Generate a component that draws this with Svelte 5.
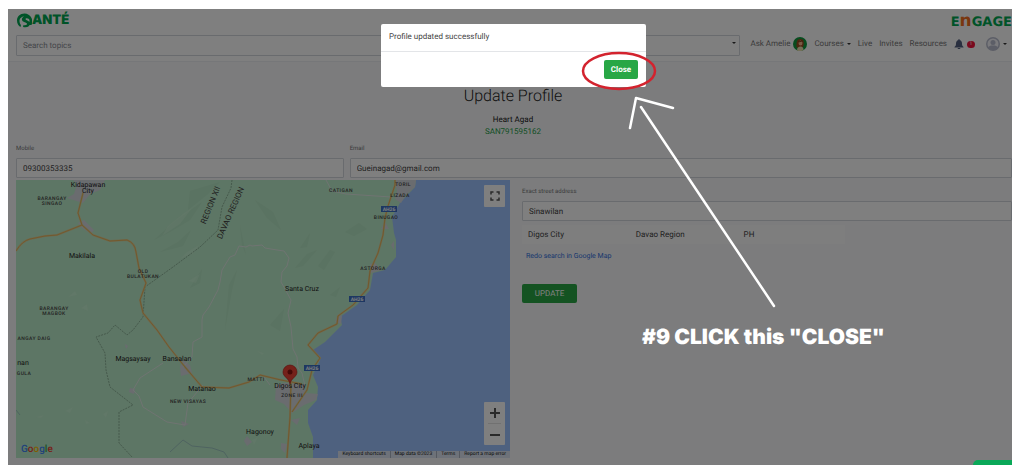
<script lang="ts">
  type Label = { text: string; x: number; y: number; kind?: string };

  let mobile = $state('09300353335');
  let email = $state('Gueinagad@gmail.com');
  let street = $state('Sinawilan');
  let showDialog = $state(true);

  const places: Label[] = [
    { text: 'Kidapawan', x: 88, y: 187 },
    { text: 'City', x: 88, y: 193 },
    { text: 'Makilala', x: 82, y: 258 },
    { text: 'Santa Cruz', x: 302, y: 291 },
    { text: 'Magsaysay', x: 133, y: 361 },
    { text: 'Bansalan', x: 177, y: 361 },
    { text: 'Matanao', x: 202, y: 391 },
    { text: 'Digos City', x: 290, y: 388 },
    { text: 'Hagonoy', x: 260, y: 434 },
    { text: 'Aplaya', x: 309, y: 448 },
    { text: 'nan', x: 23, y: 365 },
    { text: 'BARANGAY', x: 52, y: 200, kind: 'small' },
    { text: 'SINGAO', x: 52, y: 205, kind: 'small' },
    { text: 'OLD', x: 143, y: 273, kind: 'small' },
    { text: 'BULATUKAN', x: 143, y: 278, kind: 'small' },
    { text: 'BARANGAY', x: 54, y: 310, kind: 'small' },
    { text: 'MAGBOK', x: 54, y: 315, kind: 'small' },
    { text: 'ANGAY DAIG', x: 34, y: 340, kind: 'small' },
    { text: 'GULA', x: 24, y: 375, kind: 'small' },
    { text: 'NEW VISAYAS', x: 188, y: 403, kind: 'small' },
    { text: 'MATTI', x: 256, y: 381, kind: 'small' },
    { text: 'ZONE III', x: 292, y: 397, kind: 'small' },
    { text: 'CATIGAN', x: 341, y: 192, kind: 'small' },
    { text: 'TORIL', x: 403, y: 186, kind: 'small' },
    { text: 'LIZADA', x: 400, y: 197, kind: 'small' },
    { text: 'BINUGAO', x: 386, y: 219, kind: 'small' },
    { text: 'ASTORGA', x: 373, y: 270, kind: 'small' }
  ];

  const shields = [
    { x: 389, y: 209 },
    { x: 357, y: 299 },
    { x: 312, y: 368 }
  ];
</script>

<div class="page">
  <header>
    <div class="brands">
      <a class="sante" href="/" aria-label="Santé">
        <svg width="15" height="15" viewBox="0 0 30 30" aria-hidden="true">
          <path fill="#00a651" d="M15 1C6 1 0 7 0 15c0 6 3 11 7 13l1-4c-2-2-3-5-3-8 0-6 5-9 9-9-3 2-5 4-4 7 1 5 10 4 10 8 0 2-3 3-7 2l-1 4c8 2 14-1 14-7 0-6-9-6-9-9 0-2 4-2 7 0 2 3 1 8-1 12h6c2-4 2-10 0-14C26 4 21 1 15 1z" />
        </svg>
        <span>ANTÉ</span>
      </a>
      <a class="engage" href="/">E<span>n</span>GAGE</a>
    </div>
    <div class="bar">
      <div class="search">
        <select aria-label="Search topics">
          <option>Search topics</option>
        </select>
        <i class="caret"></i>
      </div>
      <nav>
        <a class="ask" href="#ask">
          Ask Amelie
          <svg width="14" height="14" viewBox="0 0 28 28" aria-hidden="true">
            <circle cx="14" cy="14" r="14" fill="#10983f" />
            <path d="M7 20c0-9 0-16 8-16 7 0 7 6 6 14l-3 4h-8z" fill="#9a4c20" />
            <ellipse cx="15" cy="12" rx="4" ry="5" fill="#f2b48a" />
            <path d="M8 27c0-6 3-8 7-8s6 3 6 7c-4 3-9 3-13 1z" fill="#e8dfb0" />
            <path d="M11 8c3 1 6 0 7-2l2 4-2-1-7 2z" fill="#7a3615" />
          </svg>
        </a>
        <a class="courses" href="#courses">Courses <i class="caret"></i></a>
        <a href="#live">Live</a>
        <a href="#invites">Invites</a>
        <a href="#resources">Resources</a>
        <button class="bell" aria-label="Notifications">
          <svg width="10" height="10" viewBox="0 0 20 20" aria-hidden="true">
            <path fill="#525f7f" d="M9 0h2v2c4 1 5 4 5 7 0 4 1 5 3 7v1H1v-1c2-2 3-3 3-7 0-3 1-6 5-7zM7 18h6c0 3-6 3-6 0z" />
          </svg>
          <span class="badge">1</span>
        </button>
        <button class="user" aria-label="Account">
          <svg width="14" height="14" viewBox="0 0 28 28" aria-hidden="true">
            <circle cx="14" cy="14" r="12.500" fill="#f5f5fa" stroke="#b9bdce" stroke-width="3" />
            <circle cx="14" cy="11" r="5" fill="#b9bdce" />
            <path d="M4 22c1-4 5-5 10-5s9 1 10 5c-5 6-15 6-20 0z" fill="#b9bdce" />
          </svg>
          <i class="caret"></i>
        </button>
      </nav>
    </div>
  </header>

  <main>
    <h1>Update Profile</h1>
    <p class="name">Heart Agad</p>
    <p class="member">SAN791595162</p>

    <div class="contact">
      <div class="field mobile">
        <label for="mobile">Mobile</label>
        <input id="mobile" type="text" bind:value={mobile} />
      </div>
      <div class="field email">
        <label for="email">Email</label>
        <input id="email" type="text" bind:value={email} />
      </div>
    </div>

    <div class="location">
      <div class="map">
        <svg class="terrain" viewBox="16 180 494 278" preserveAspectRatio="xMidYMid slice">
          <rect x="16" y="180" width="494" height="278" fill="#9dc3ff" />
          <path fill="#bbecca" d="M16 180H416L415 187 400 203 392 217 394 233 396 240 396 257 385 270 373 273 370 290 357 305 340 317 342 325 325 342 313 350 320 360 313 375 318 387 317 400 308 410 308 423 313 437 313 458H16z" />
          <g fill="#acdfbd" opacity=".45">
            <path d="M154 240l20-18 28-20-12 18-20 12zM160 252l18-10 13-12-8 16zM190 288l12-19-2 14zM240 225l6 30-4-10zM295 268l12-14 10-4-14 16zM318 266l12-16 5 2-11 18zM300 248l10-15-3 14zM330 295l10-8-4 10zM225 330l4-45 8-15-5 20z" />
            <path d="M190 191l30-9-12 12-20 16zM255 200l18 12 8 18-14-12zM345 232l14-9 8 6-13 7zM270 325l14-16-4 22z" />
          </g>
          <g fill="#c9f3d5" opacity=".5">
            <path d="M162 236l18-12 12-16-8 5-16 13zM180 259l14-6 5-8-12 7zM68 297l7-6 2 4zM81 308l6-4 1 7zM188 281l12-7-4 9zM65 411l8-4-3 6zM36 417l8-2-3 3zM85 420l5 3-4 1zM103 414l5-3-2 7zM257 351l7 2-2 2zM252 440l6-3-4 8z" />
          </g>
          <g fill="#d4d8de">
            <path d="M73 180h32l-5 10-10 4-7 9-16-5 7-4 3-10zM394 180h22l-1 7-9 8-5 8-6-4 2-8zM78 223l6-3 10 10-3 4-9-6zM180 367l3-7 7 5 2 8-11 3zM276 385l8-2 20 1 2 9 12 1-2 6-12 5-12 8-8-9-9-4zM381 229l4-7 4 7zM335 322l3-8 4 2-1 8zM125 344l3 2-2 3zM130 388l5 1-1 5-5-2zM181 421l8 3-6 3zM291 420l9-2-3 7zM281 443l6 1-2 9-4-4zM244 441l3-5 5 6-5 4zM391 245l3-4v9z" />
            <path d="M370 264l5-1 6 7-10 3z" />
          </g>
          <path d="M232 180l-1 8-9 19-4 23-18 17-27 20-28 20-2 30-10 13-6 5-12-10-7 8-12 4 9 16 1 17 4 17 23 18-14 7v31l13 14" fill="none" stroke="#7fa58b" stroke-width=".8" stroke-dasharray="2 1" />
          <path d="M170 452l13-12 9 6 20 2 12 4 4 6M16 410l4 5" fill="none" stroke="#91b8bd" stroke-width=".7" />
          <g fill="none" stroke="#dfe8e4" stroke-width="1" stroke-linejoin="round">
            <path d="M202 320l1-5 6-8 9-17 2-8 2-12 8-13 5-2 4-9 7 1 4-2 2 1 10-1 3 3 12 2 7 1 5 7-2 8-5 6-1 10 4 7 6 11-3 13 3 14 2 22 4 8 1 11 4 5 3 13" />
            <path d="M202 320v17l-9 5-1 15-9 10M163 363l-23 15-7 12 6 6 4 11 24 15 18 3 3-22 15-18M326 180l6 11 14 3 45 3M270 385l-6-8" />
          </g>
          <g fill="none" stroke="#dcd29a" stroke-width="2" stroke-linejoin="round">
            <path d="M16 251q6-10 14-12l15-3 12-1 25-10-4-12 5-20M82 225l11 10 17 6 17-1q8 3 9 12l3 16 7 15-6 17 3 13 14 17 12 17 16 20 17 20 27 1 20-6 11-7 21 5 21 4M287 458l3-41 1-34M292 412l15-22 5-20 8-12-12-13 10-12 19-9 1-8 15-11 15-17 2-17 8-18 5-18 2-17 3-12 7-21V180" />
          </g>
          <path d="M16 251q6-10 14-12l15-3 12-1 25-10-4-12 5-20M82 225l11 10 17 6 17-1q8 3 9 12l3 16 7 15-6 17 3 13 14 17 12 17 16 20 17 20 27 1 20-6 11-7 21 5 21 4M287 458l3-41 1-34M292 412l15-22 5-20 8-12-12-13 10-12 19-9 1-8 15-11 15-17 2-17 8-18 5-18 2-17 3-12 7-21V180" fill="none" stroke="#e6b35c" stroke-width="1" />
          {#each shields as s}
            <rect x={s.x - 8} y={s.y - 3} width="16" height="6" fill="#3b6fc4" />
            <text class="shield" x={s.x} y={s.y + 2}>AH26</text>
          {/each}
          {#each places as p}
            <text class={p.kind ?? 'town'} x={p.x} y={p.y}>{p.text}</text>
          {/each}
          <text class="region" transform="translate(213 206) rotate(-68)">REGION XII</text>
          <text class="region" transform="translate(233 214) rotate(-66)">DAVAO REGION</text>
          <path d="M290 384c-1-6-7-7-7-12a7 7 0 0 1 14 0c0 5-6 6-7 12z" fill="#ea4335" stroke="#b31412" stroke-width=".6" />
          <circle cx="290" cy="372" r="2.500" fill="#8d1410" />
        </svg>
        <div class="google"><b>G</b><b>o</b><b>o</b><b>g</b><b>l</b><b>e</b></div>
        <button class="fullscreen" aria-label="Toggle fullscreen view">
          <svg width="10" height="10" viewBox="0 0 10 10" fill="none" stroke="#555" stroke-width="1.500" aria-hidden="true">
            <path d="M1 3.500V1h2.500M6.500 1H9v2.500M9 6.500V9H6.500M3.500 9H1V6.500" />
          </svg>
        </button>
        <div class="zoom">
          <button aria-label="Zoom in">
            <svg width="10" height="10" viewBox="0 0 10 10" aria-hidden="true"><path d="M5 0v10M0 5h10" stroke="#555" stroke-width="2" /></svg>
          </button>
          <button aria-label="Zoom out">
            <svg width="10" height="10" viewBox="0 0 10 10" aria-hidden="true"><path d="M0 5h10" stroke="#555" stroke-width="2" /></svg>
          </button>
        </div>
        <div class="credits">
          <button>Keyboard shortcuts</button>
          <span>Map data ©2023</span>
          <a href="#terms">Terms</a>
          <a href="#report">Report a map error</a>
        </div>
      </div>

      <div class="address">
        <div class="field">
          <label for="street">Exact street address</label>
          <input id="street" type="text" bind:value={street} />
        </div>
        <div class="region-row">
          <span>Digos City</span>
          <span>Davao Region</span>
          <span>PH</span>
        </div>
        <a class="redo" href="#map">Redo search in Google Map</a>
        <button class="update">UPDATE</button>
      </div>
    </div>
  </main>

  <div class="backdrop">
    {#if showDialog}
      <div class="dialog" role="dialog" aria-modal="true" aria-labelledby="dialog-text">
        <p id="dialog-text">Profile updated successfully</p>
        <div class="dialog-footer">
          <button onclick={() => (showDialog = false)}>Close</button>
        </div>
      </div>
    {/if}
  </div>
  <div class="chat-tab"></div>

  <!-- tutorial markup over the page -->
  <svg class="marks" width="220" height="270" viewBox="580 50 220 270" fill="none" aria-hidden="true">
    <ellipse cx="619" cy="71" rx="36" ry="18" stroke="#d3232e" stroke-width="2.500" />
    <path d="M630 128l6-30 37 10M641 107l133 199" stroke="#fff" stroke-width="2.500" stroke-linecap="round" stroke-linejoin="round" />
  </svg>
  <p class="step">#9 CLICK this "CLOSE"</p>
</div>

<style>
  :global(body) {
    margin: 0;
    background: #fff;
  }

  .page {
    position: relative;
    margin: 9px 12px 8px 8px;
    overflow: hidden;
    background: #f8f9fb;
    color: #525f7f;
    font-family: Roboto, sans-serif;
    font-size: 8px;
    line-height: 12px;
    text-rendering: geometricPrecision;
  }

  .page * {
    box-sizing: border-box;
    text-rendering: inherit;
  }

  p,
  h1 {
    margin: 0;
  }

  a {
    color: inherit;
    text-decoration: none;
  }

  button {
    border: 0;
    padding: 0;
    background: none;
    font: inherit;
    color: inherit;
    cursor: pointer;
  }

  .caret {
    display: inline-block;
    border: 2px solid transparent;
    border-top-color: #333;
    border-bottom: 0;
  }

  header {
    background: #fff;
    padding-bottom: 5px;
    border-bottom: 1px solid #eceef2;
  }

  .brands {
    display: flex;
    justify-content: space-between;
    align-items: center;
    height: 26px;
    padding-left: 9px;
  }

  .sante {
    display: flex;
    align-items: center;
    padding-bottom: 4px;
    color: #00a651;
    font: 900 13px/16px Inter, sans-serif;
  }

  .engage {
    color: #00a651;
    font: bold 13px/16px 'DejaVu Sans', sans-serif;
  }

  .engage span {
    color: #f36f21;
    font-size: 17px;
  }

  .bar {
    display: flex;
    align-items: center;
  }

  .search {
    position: relative;
    flex: 1;
    margin-left: 8px;
  }

  .search select {
    display: block;
    width: 100%;
    height: 21px;
    padding: 0 6px;
    appearance: none;
    border: 1px solid #d2d6dd;
    border-radius: 1px;
    background: #fff;
    color: #8a8d94;
    font: inherit;
  }

  .search .caret {
    position: absolute;
    right: 4px;
    top: 7px;
  }

  nav {
    display: flex;
    align-items: center;
    gap: 7px;
    padding: 0 5px 3px 10px;
    color: #777;
  }

  .ask,
  .courses,
  .bell,
  .user {
    display: flex;
    align-items: center;
    gap: 3px;
  }

  .user {
    margin-left: 4px;
  }

  .badge {
    width: 8px;
    height: 7px;
    border-radius: 4px;
    background: #f5123d;
    color: #fff;
    font-size: 5px;
    line-height: 7px;
  }

  main {
    padding: 24px 0 7px 8px;
  }

  h1 {
    color: #222;
    font-size: 16px;
    font-weight: 300;
    line-height: 20px;
    text-align: center;
    padding-right: 2px;
  }

  .name,
  .member {
    text-align: center;
    padding-right: 2px;
  }

  .name {
    padding-top: 8px;
    color: #222;
  }

  .member {
    color: #1f9d47;
  }

  .contact {
    display: flex;
    gap: 6px;
    padding-top: 5px;
  }

  .mobile {
    flex: 0 0 calc(33% - 1px);
  }

  .email {
    flex: 1;
  }

  .field label {
    display: block;
    color: #777;
    font-size: 6px;
    line-height: 12px;
    padding-bottom: 3px;
  }

  .field input {
    display: block;
    width: 100%;
    height: 20px;
    padding: 0 6px;
    border: 1px solid #d2d6dd;
    border-radius: 1px;
    background: #fff;
    color: #444;
    font: inherit;
  }

  .location {
    display: flex;
    gap: 12px;
    padding-top: 2px;
  }

  .map {
    position: relative;
    flex: 0 0 calc(50% - 4px);
    aspect-ratio: 494 / 278;
    overflow: hidden;
  }

  .terrain {
    display: block;
    width: 100%;
    height: 100%;
  }

  .terrain text {
    text-anchor: middle;
    font-family: Roboto, sans-serif;
    fill: #222;
  }

  .terrain .town {
    font-size: 7px;
  }

  .terrain .small {
    font-size: 5px;
    font-weight: 500;
    letter-spacing: 0.08em;
    fill: #444;
  }

  .terrain .region {
    font-size: 8px;
    fill: #444;
  }

  .terrain .shield {
    font-size: 5px;
    font-weight: 700;
    fill: #fff;
  }

  .google {
    position: absolute;
    left: 5px;
    bottom: 2px;
    font-size: 10px;
  }

  .google b {
    font-weight: 500;
    color: #4285f4;
  }

  .google b:nth-child(2),
  .google b:nth-child(6) {
    color: #ea4335;
  }

  .google b:nth-child(3) {
    color: #fbbc05;
  }

  .google b:nth-child(5) {
    color: #34a853;
  }

  .fullscreen,
  .zoom {
    position: absolute;
    right: 5px;
    width: 21px;
    background: #fff;
    border-radius: 1px;
  }

  .fullscreen {
    top: 5px;
    height: 22px;
    display: grid;
    place-items: center;
  }

  .zoom {
    bottom: 13px;
    display: grid;
  }

  .zoom button {
    display: grid;
    place-items: center;
    height: 21px;
  }

  .zoom button + button {
    margin: 0 4px;
    height: 22px;
    border-top: 1px solid #e2e2e2;
  }

  .credits {
    position: absolute;
    right: 0;
    bottom: 0;
    display: flex;
    background: #dce5f2;
    color: #111;
    font-size: 5px;
    line-height: 7px;
  }

  .credits > * {
    padding: 0 4px;
  }

  .credits > * + * {
    border-left: 1px solid #aab3c0;
  }

  .address {
    flex: 1;
    padding-top: 6px;
  }

  .region-row {
    display: grid;
    grid-template-columns: repeat(3, 1fr);
    width: 66%;
    margin-top: 4px;
    background: #fcfcfd;
    color: #444;
    line-height: 19px;
  }

  .region-row span {
    padding-left: 6px;
  }

  .redo {
    display: block;
    margin: 6px 4px 22px;
    color: #2f6fdc;
    font-size: 7px;
  }

  .update {
    width: 55px;
    height: 19px;
    border-radius: 2px;
    background: #28a745;
    color: #fff;
  }

  .backdrop {
    position: absolute;
    inset: 0;
    display: flex;
    justify-content: center;
    align-items: flex-start;
    padding: 15px 0 0 7px;
    background: rgba(0, 0, 0, 0.5);
  }

  .dialog {
    width: 265px;
    border-radius: 2px;
    background: #fff;
    color: #444;
  }

  .dialog p {
    padding: 7px 8px 8px;
  }

  .dialog-footer {
    display: flex;
    justify-content: flex-end;
    padding: 8px;
    border-top: 1px solid #e3e5e8;
  }

  .dialog-footer button {
    width: 34px;
    height: 19px;
    border-radius: 2px;
    background: #28a745;
    color: #fff;
    font-weight: 700;
  }

  .chat-tab {
    position: absolute;
    right: 0;
    bottom: 0;
    width: 39px;
    height: 5px;
    border-top-left-radius: 5px;
    background: #0aa858;
  }

  .marks {
    position: absolute;
    left: 572px;
    top: 41px;
    pointer-events: none;
  }

  .step {
    position: absolute;
    left: 634px;
    top: 317px;
    color: #fff;
    font: 900 21px/24px Inter, sans-serif;
    white-space: nowrap;
  }
</style>
